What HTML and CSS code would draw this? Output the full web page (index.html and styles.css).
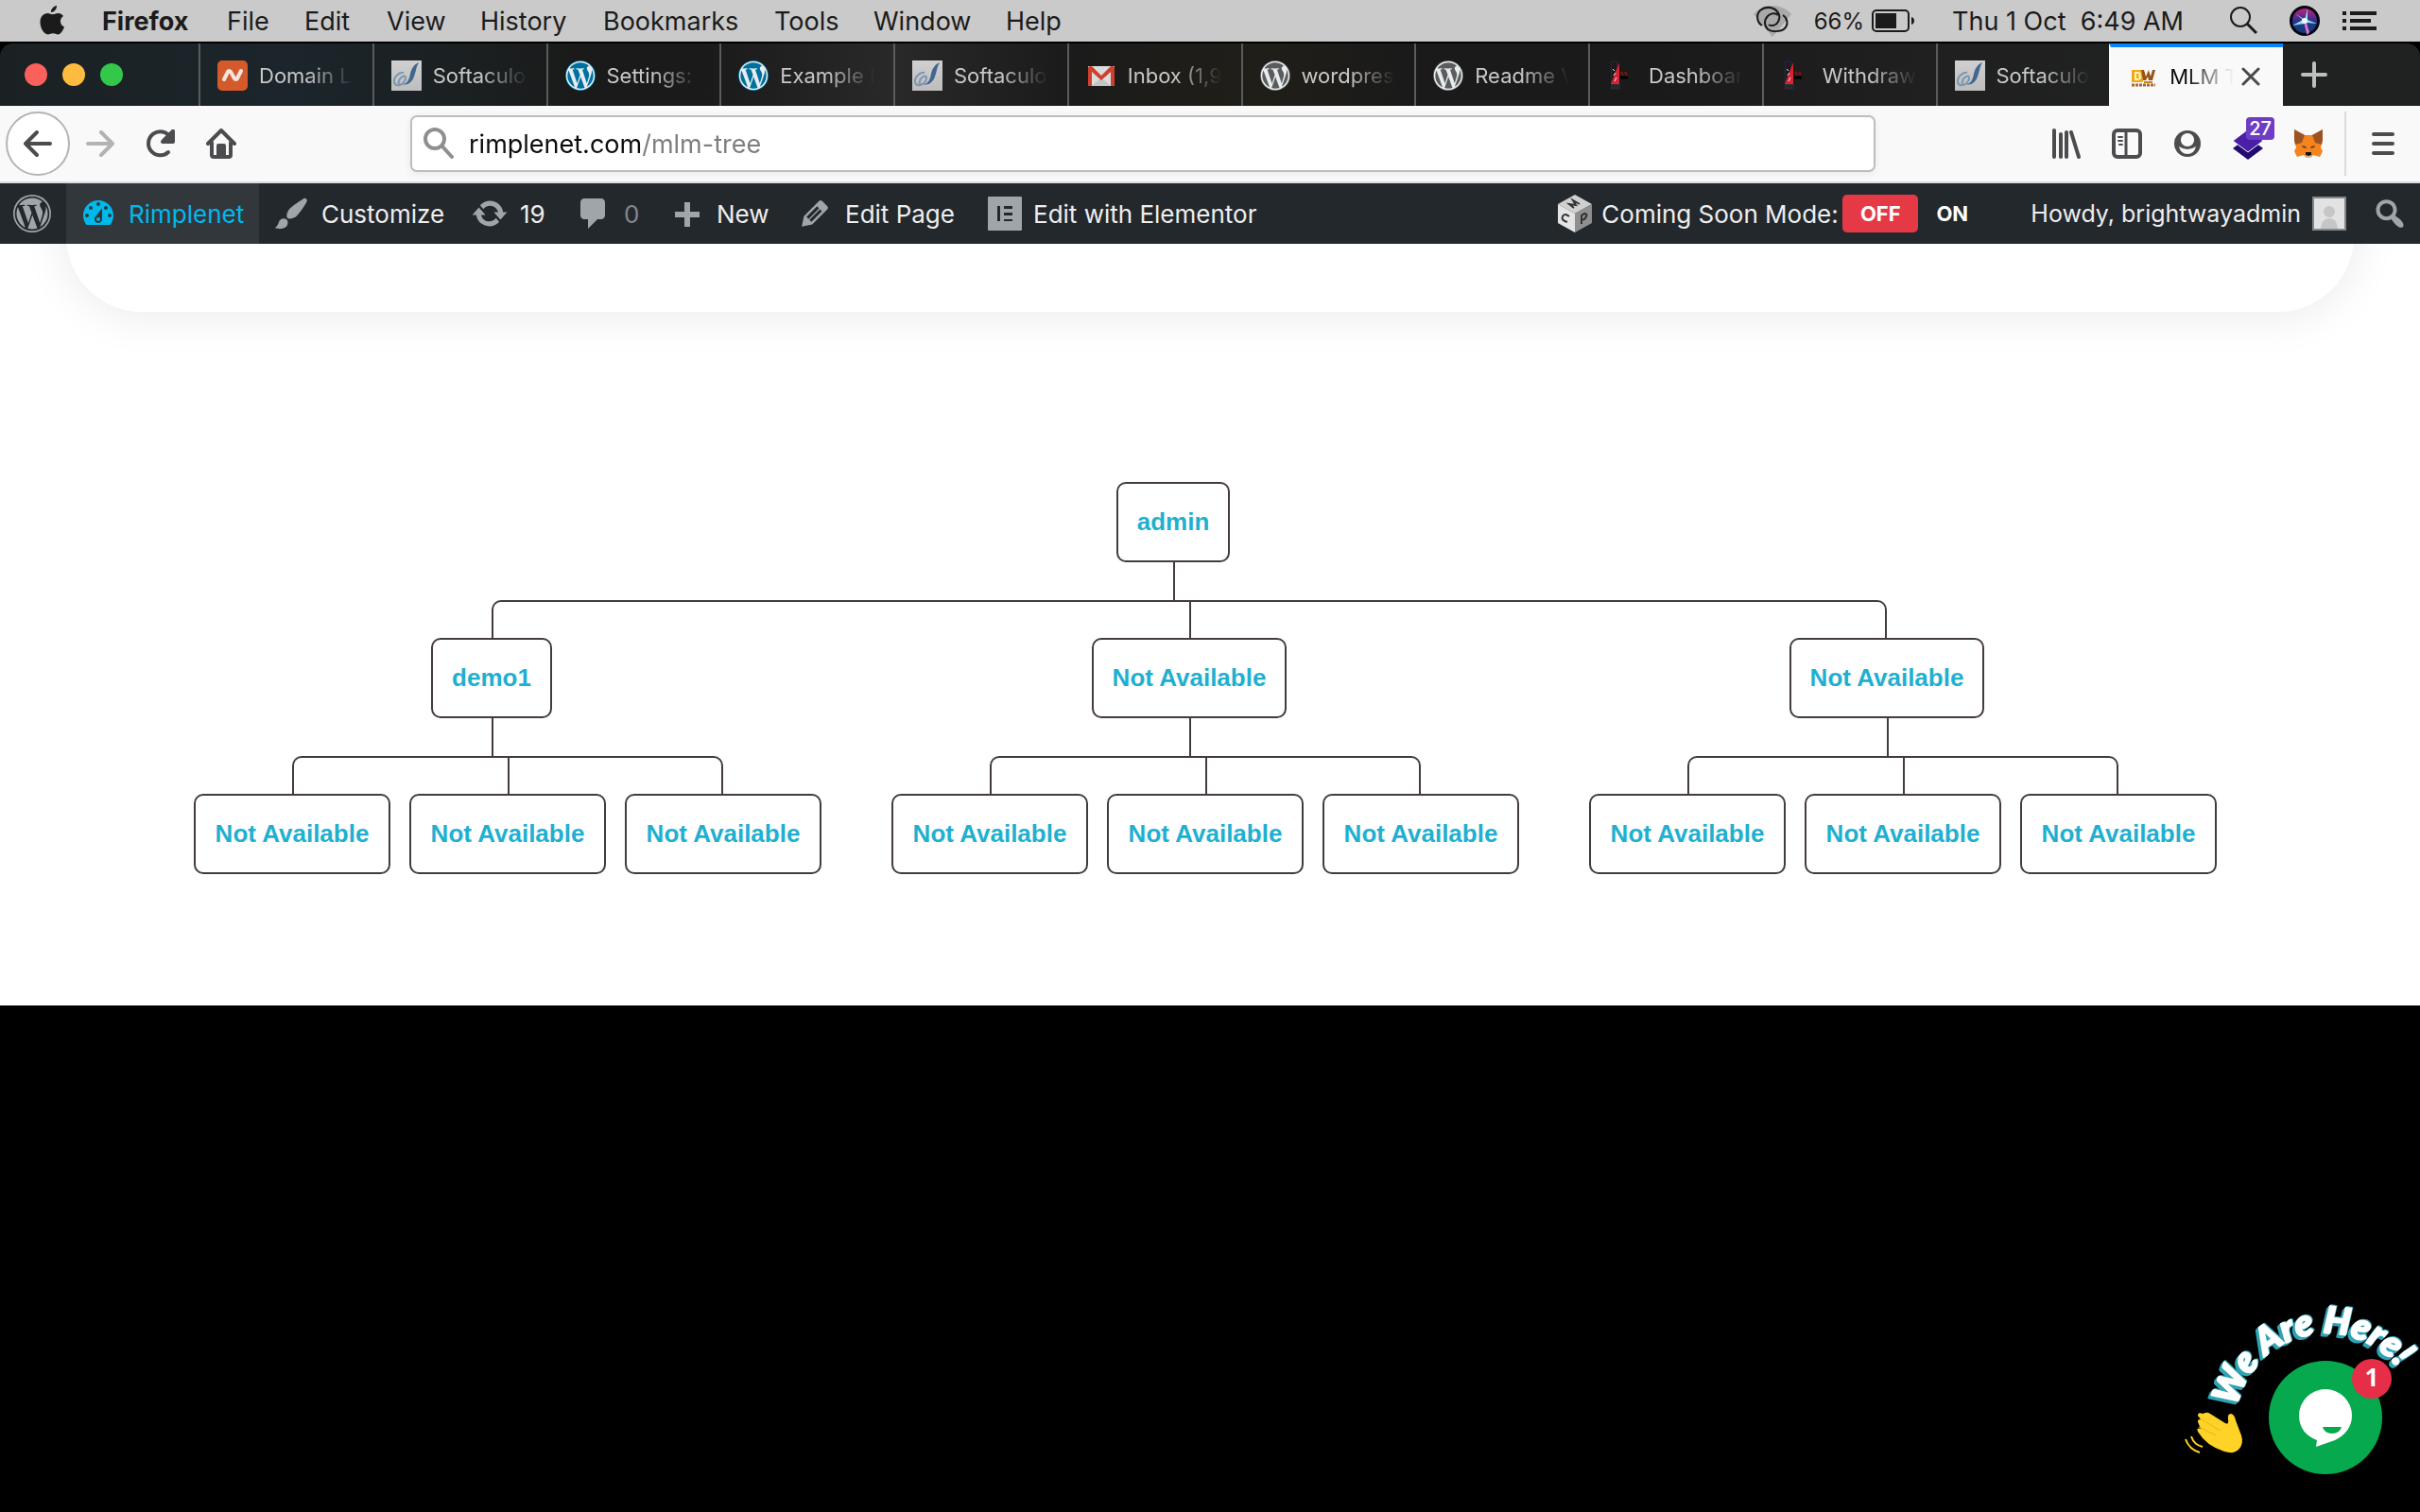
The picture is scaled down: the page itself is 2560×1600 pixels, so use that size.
FILE: index.html
```html
<!DOCTYPE html>
<html lang="en">
<head>
<meta charset="utf-8">
<title>MLM Tree</title>
<link rel="stylesheet" href="styles.css">
</head>
<body>
<svg class="defs" aria-hidden="true">
  <defs>
    <path id="wp-shape" d="M21.469 6.825c.84 1.537 1.318 3.3 1.318 5.175 0 3.979-2.156 7.456-5.363 9.325l3.295-9.527c.615-1.54.82-2.771.82-3.864 0-.405-.026-.78-.07-1.11m-7.981.105c.647-.03 1.232-.105 1.232-.105.582-.075.514-.93-.067-.899 0 0-1.755.135-2.88.135-1.064 0-2.85-.15-2.85-.15-.585-.03-.661.855-.075.885 0 0 .54.061 1.125.09l1.68 4.605-2.37 7.08L5.354 6.9c.649-.03 1.234-.1 1.234-.1.585-.075.516-.93-.065-.896 0 0-1.746.138-2.874.138-.2 0-.438-.008-.69-.015C4.911 3.15 8.235 1.215 12 1.215c2.809 0 5.365 1.072 7.286 2.833-.046-.003-.091-.009-.141-.009-1.06 0-1.812.923-1.812 1.914 0 .89.513 1.643 1.06 2.531.411.72.89 1.643.89 2.977 0 .915-.354 1.994-.821 3.479l-1.075 3.585-3.9-11.61.001.014zM12 22.784c-1.059 0-2.081-.153-3.048-.437l3.237-9.406 3.315 9.087c.024.053.05.101.078.149-1.12.393-2.325.609-3.582.609M1.211 12c0-1.564.336-3.05.935-4.39L7.29 21.709C3.694 19.96 1.212 16.271 1.211 12M12 0C5.385 0 0 5.385 0 12s5.385 12 12 12 12-5.385 12-12S18.615 0 12 0"/>
    <symbol id="fav-wp" viewBox="0 0 24 24">
      <circle cx="12" cy="12" r="12" fill="currentColor"/>
      <use href="#wp-shape" fill="#e8eef0" transform="translate(.6 .6) scale(.95)"/>
    </symbol>
    <linearGradient id="soft-bg" x1="0" y1="0" x2="0" y2="1"><stop offset="0" stop-color="#d0d0d0"/><stop offset="1" stop-color="#bdbdbd"/></linearGradient>
    <symbol id="fav-soft" viewBox="0 0 32 32">
      <rect width="32" height="32" fill="url(#soft-bg)"/>
      <path d="M13 13c-5-1-11 5-10 10 1 5 8 4 11-1 2-3 1-7-2-5-3 1-5 5-4 8" fill="none" stroke="#7d97b3" stroke-width="2"/>
      <path d="M29 2c-5 2-8 7-9 12-1 6-3 11-8 11 5 2 10-2 12-8 2-5 2-10 5-15z" fill="#41668f"/>
    </symbol>
    <symbol id="fav-red" viewBox="0 0 32 32">
      <path d="M4.500 25V1h6v7" fill="none" stroke="#26264f" stroke-width="1"/>
      <path d="M13 2v23H4l5-13z" fill="#d92332"/>
      <path d="M6 9l2 2M9 13l-2 3M10 18l-2 4" stroke="#eee" stroke-width="1"/>
      <path d="M4 26h10" stroke="#2c3b78" stroke-width="1"/>
      <path d="M14 13h8M15 15h7" stroke="#b11" stroke-width="1" stroke-dasharray="3 1"/>
      <path d="M14 18h8" stroke="#000" stroke-width="3"/>
      <path d="M4 29h10" stroke="#333" stroke-width="3" stroke-dasharray="2 1"/>
    </symbol>
  </defs>
</svg>

<header class="menubar">
  <nav class="menus" aria-label="Menu bar">
    <button class="menu" aria-label="Apple"><svg width="26" height="32" viewBox="0 0 26 32" fill="#1b1b1b"><path d="M18 0c.3 3.500-2.800 7-6 7C11.600 3.700 14.800.500 18 0zM25 11c-4.500 2.800-3.800 9.500 1 11.400-1 3-3.800 8-6.700 8-2 0-2.800-1.200-5.300-1.200s-3.300 1.200-5.300 1.200C4.500 30.400.500 23.500.500 17.500.500 11.500 4.300 8 8.300 8c2.200 0 4 1.300 5.400 1.300S17.300 8 19.500 8c2.200 0 4.200 1.100 5.500 3z"/></svg></button>
    <button class="menu app">Firefox</button>
    <button class="menu">File</button>
    <button class="menu">Edit</button>
    <button class="menu">View</button>
    <button class="menu">History</button>
    <button class="menu">Bookmarks</button>
    <button class="menu">Tools</button>
    <button class="menu">Window</button>
    <button class="menu">Help</button>
  </nav>
  <div class="status">
    <svg width="42" height="36" viewBox="0 0 42 36" fill="none"><path d="M1 11C12-1 30-1 41 11L21 35z" fill="#a9a9a9"/><g stroke="#1b1b1b" stroke-width="2"><path d="M10 23C5 20 3 12 8 7q6-5 14-2c6 3 8 9 5 14-2 4-7 5-10 3"/><path d="M32 12c5 3 6 10 2 14-4 4-14 4-18 1-4-4-4-10 0-14 3-3 8-4 11-1"/></g></svg>
    <span class="percent">66%</span>
    <svg width="46" height="24" viewBox="0 0 46 24" fill="none"><rect x="1" y="1" width="38" height="22" rx="4" stroke="#1b1b1b" stroke-width="2"/><rect x="4" y="4" width="22" height="16" fill="#1b1b1b"/><path d="M42 8c4 1 4 7 0 8z" fill="#1b1b1b"/></svg>
    <time class="clock">Thu 1 Oct&nbsp; 6:49 AM</time>
    <svg width="30" height="30" viewBox="0 0 30 30" fill="none" stroke="#1b1b1b"><circle cx="12" cy="11" r="10" stroke-width="2"/><path d="M19 18l10 10" stroke-width="3"/></svg>
    <svg class="siri" width="32" height="32" viewBox="0 0 32 32">
      <defs><linearGradient id="siri" x1="0" y1="0" x2="0" y2="1"><stop offset="0" stop-color="#c0207c"/><stop offset=".5" stop-color="#31308f"/><stop offset="1" stop-color="#0a3f72"/></linearGradient></defs>
      <circle cx="16" cy="16" r="16" fill="#05050f"/><circle cx="16" cy="16" r="13" fill="url(#siri)"/>
      <path d="M16 15L19 3l0 12 10 4-11-1 2 10-4-9L3 21l11-6L6 8z" fill="#7fe6e6"/><path d="M16 17l3 12 1-1z" stroke="#e86bd0" stroke-width="2"/><circle cx="16" cy="16" r="3" fill="#eff"/>
    </svg>
    <svg width="36" height="20" viewBox="0 0 36 20" fill="#1b1b1b"><path d="M0 0h4v4H0zM8 0h28v4H8zM0 8h4v4H0zM8 8h22v4H8zM0 16h4v4H0zM8 16h28v4H8z"/></svg>
  </div>
</header>

<div class="window">
<div class="tabbar">
  <div class="lights"><button class="light red" aria-label="Close"></button><button class="light amber" aria-label="Minimise"></button><button class="light green" aria-label="Zoom"></button></div>
  <nav class="tabs" aria-label="Tabs">
    <a href="#" class="tab"><svg viewBox="0 0 32 32"><rect width="32" height="32" rx="5" fill="#d4592b"/><path d="M7 20l4-8q1-2 3 0l4 7q2 2 3 0l4-8" fill="none" stroke="#f5e6e0" stroke-width="4" stroke-linecap="round" stroke-linejoin="round"/></svg><span>Domain Li</span></a>
    <a href="#" class="tab"><svg><use href="#fav-soft"/></svg><span>Softaculo</span></a>
    <a href="#" class="tab"><svg class="blue"><use href="#fav-wp"/></svg><span>Settings:</span></a>
    <a href="#" class="tab"><svg class="blue"><use href="#fav-wp"/></svg><span>Example M</span></a>
    <a href="#" class="tab"><svg><use href="#fav-soft"/></svg><span>Softaculo</span></a>
    <a href="#" class="tab"><svg viewBox="0 0 32 32"><path d="M2 6h28v21H2z" fill="#dcdcdc"/><path d="M6 27l10-9 10 9z" fill="#c4c4c4"/><path d="M2 27V7q3-2 5 0l9 9 9-9q2-2 5 0v20h-4V12l-10 9L6 12v15z" fill="#d0402f"/></svg><span>Inbox (1,9</span></a>
    <a href="#" class="tab"><svg class="grey"><use href="#fav-wp"/></svg><span>wordpress</span></a>
    <a href="#" class="tab"><svg class="grey"><use href="#fav-wp"/></svg><span>Readme V</span></a>
    <a href="#" class="tab"><svg><use href="#fav-red"/></svg><span>Dashboar</span></a>
    <a href="#" class="tab"><svg><use href="#fav-red"/></svg><span>Withdraw</span></a>
    <a href="#" class="tab"><svg><use href="#fav-soft"/></svg><span>Softaculo</span></a>
    <div class="tab active"><svg viewBox="0 0 32 32"><rect x="4" y="9" width="12" height="13" fill="#f0a818"/><path d="M8 12h3q3 0 1 3 3 2-1 4H8z" fill="none" stroke="#fff3b0" stroke-width="2"/><path d="M14 9h3l2 7 3-7 2 7 2-7h3l-3 11h-4l-1-4-2 4h-3z" fill="#9a5314"/><path d="M17 22h9" stroke="#c98420" stroke-width="2"/><path d="M4 25h25" stroke="#a06a38" stroke-width="3" stroke-dasharray="3 1"/></svg><span>MLM T</span><button class="close" aria-label="Close tab"><svg width="20" height="20" viewBox="0 0 20 20" stroke="#4a4a4a" stroke-width="3" stroke-linecap="round"><path d="M2 2l16 16M18 2L2 18"/></svg></button></div>
  </nav>
  <button class="newtab" aria-label="New tab"><svg width="28" height="28" viewBox="0 0 28 28" stroke="#bebebe" stroke-width="4" stroke-linecap="round"><path d="M14 2v24M2 14h24"/></svg></button>
</div>

<div class="toolbar">
  <div class="nav-buttons">
    <button class="back" aria-label="Back"><svg class="ico" viewBox="0 0 32 32"><path d="M29 16H4M15 4L3 16l12 12"/></svg></button>
    <button class="tool faded" aria-label="Forward"><svg class="ico" viewBox="0 0 32 32"><path d="M3 16h25M17 4l12 12-12 12"/></svg></button>
    <button class="tool" aria-label="Reload"><svg class="ico" viewBox="0 0 32 32"><path d="M26 9A12.500 12.500 0 1 0 24 25M29 3v11H18z"/><path d="M29 3v10H19z" fill="#4c4c4f"/></svg></button>
    <button class="tool" aria-label="Home"><svg class="ico" viewBox="0 0 32 32"><path d="M2 16L16 2l14 14M6 15v13q0 2 2 2h16q2 0 2-2V15"/><path d="M13 28V18h6v10" fill="#4c4c4f"/></svg></button>
  </div>
  <label class="urlbar">
    <svg width="32" height="34" viewBox="0 0 32 34" fill="none" stroke="#8f8f8f" stroke-width="4" stroke-linecap="round"><circle cx="12" cy="12" r="10"/><path d="M20 20l10 11"/></svg>
    <input class="url" type="text" value="rimplenet.com/mlm-tree" aria-label="Address">
  </label>
  <div class="extras">
    <button class="tool" aria-label="Library"><svg class="ico" viewBox="0 0 32 32" ><path d="M3 2v28M10 6v24M16 4v26M21 4l8 26" stroke-width="4"/></svg></button>
    <button class="tool" aria-label="Sidebar"><svg class="ico" viewBox="0 0 32 32"><rect x="2" y="2" width="28" height="28" rx="4" stroke-width="4"/><path d="M15 2v28" stroke-width="3"/><path d="M7 9h4M7 13h4M8 17h3" stroke-width="2"/></svg></button>
    <button class="tool" aria-label="Account"><svg class="ico" viewBox="0 0 32 32"><circle cx="16" cy="16" r="14" fill="#4c4c4f" stroke="none"/><path d="M16 5c5 0 7 4 7 7 0 4-3 7-7 7s-7-3-7-7c0-3 2-7 7-7z" fill="#f9f9fa" stroke="none"/><path d="M7 19q9 6 18 0-2 8-9 8t-9-8z" fill="#f9f9fa" stroke="none"/></svg></button>
    <button class="tool" aria-label="Wallets, 27"><svg width="32" height="34" viewBox="0 0 32 34"><path d="M16 10l16 12-16 12L0 22z" fill="#220b6e"/><path d="M16 2l16 12-16 12L0 14z" fill="#4a1fa8" stroke="#f9f9fa" stroke-width="1"/></svg><span class="count">27</span></button>
    <button class="tool" aria-label="Fox wallet"><svg width="32" height="32" viewBox="0 0 32 32"><path d="M1 1l11 6h8l11-6v12l-2 7 2 4-3 6-7-2-3 3h-4l-3-3-7 2-3-6 2-4-2-7z" fill="#f5841f"/><path d="M1 1l11 6-3 8-7 2-1-5zM31 1L20 7l3 8 7 2 1-5z" fill="#9c5322"/><path d="M13 28h6l-1 3h-4z" fill="#c9b8a8"/><path d="M9 18l4 1 1 2-4-1zM23 18l-4 1-1 2 4-1z" fill="#5b3a25"/><path d="M13 25h6v3l-3 1-3-1z" fill="#161616"/></svg></button>
    <button class="tool appmenu" aria-label="Menu"><svg class="ico" width="28" viewBox="0 0 32 32"><path d="M6 6h20M6 16h20M6 26h20" stroke-width="4"/></svg></button>
  </div>
</div>
</div>

<nav class="adminbar" aria-label="Toolbar">
  <div class="admin-left">
    <a href="#" class="wp" aria-label="About WordPress"><svg width="40" height="40" viewBox="0 0 24 24"><circle cx="12" cy="12" r="12" fill="#a0a5aa"/><use href="#wp-shape" fill="#23282d" transform="translate(1 1) scale(.917)"/></svg></a>
    <a href="#" class="item current"><svg viewBox="0 0 20 20"><path fill-rule="evenodd" d="M3.760 16h12.480c1.100-1.370 1.760-3.110 1.760-5 0-4.420-3.580-8-8-8s-8 3.580-8 8c0 1.890.66 3.630 1.760 5zM10 4c.55 0 1 .45 1 1s-.45 1-1 1-1-.45-1-1 .45-1 1-1zM6 6c.55 0 1 .45 1 1s-.45 1-1 1-1-.45-1-1 .45-1 1-1zm8 0c.55 0 1 .45 1 1s-.45 1-1 1-1-.45-1-1 .45-1 1-1zm-5.370 5.550L12 7v6c0 1.100-.9 2-2 2s-2-.9-2-2c0-.57.24-1.080.63-1.450zM4 10c.55 0 1 .45 1 1s-.45 1-1 1-1-.45-1-1 .45-1 1-1zm12 0c.55 0 1 .45 1 1s-.45 1-1 1-1-.45-1-1 .45-1 1-1zm-5 3c0-.55-.45-1-1-1s-1 .45-1 1 .45 1 1 1 1-.45 1-1z"/></svg>Rimplenet</a>
    <a href="#" class="item"><svg viewBox="0 0 20 20"><path d="M18.330 3.570s.27-.8-.31-1.360c-.53-.52-1.220-.24-1.220-.24-.61.3-5.760 3.470-7.670 5.570-.86.96-2.060 3.790-1.090 4.820.92.98 3.960-.17 4.790-1 2.060-2.060 5.210-7.170 5.500-7.790zM1.400 17.650c2.370-1.560 1.460-3.410 3.230-4.640.93-.65 2.220-.62 3.080.29.63.67.8 2.570-.16 3.460-1.570 1.450-4 1.550-6.150.89z"/></svg>Customize</a>
    <a href="#" class="item"><svg viewBox="0 0 20 20"><path d="M10.200 3.280c3.530 0 6.430 2.610 6.920 6h2.080l-3.500 4-3.500-4h2.320c-.45-1.970-2.210-3.450-4.320-3.450-1.450 0-2.730.71-3.540 1.780L4.950 5.660C6.230 4.200 8.110 3.280 10.200 3.280zm-.4 13.440c-3.520 0-6.430-2.610-6.920-6H.8l3.500-4c1.170 1.330 2.330 2.670 3.500 4H5.480c.45 1.970 2.210 3.450 4.320 3.450 1.450 0 2.730-.71 3.540-1.780l1.710 1.950c-1.280 1.460-3.150 2.380-5.250 2.380z"/></svg>19</a>
    <a href="#" class="item dim"><svg viewBox="0 0 20 20"><path d="M5 2h9c1.100 0 2 .9 2 2v7c0 1.100-.9 2-2 2h-2l-5 5v-5H5c-1.100 0-2-.9-2-2V4c0-1.100.9-2 2-2z"/></svg>0</a>
    <a href="#" class="item"><svg viewBox="0 0 20 20"><path d="M17 9v3h-5v5H9v-5H4V9h5V4h3v5h5z"/></svg>New</a>
    <a href="#" class="item"><svg viewBox="0 0 20 20"><path fill-rule="evenodd" d="M13.890 3.390l2.710 2.720c.46.46.42 1.240.03 1.640l-8.010 8.020-5.560 1.160 1.160-5.580s7.600-7.630 7.990-8.030c.39-.39 1.220-.39 1.680.07zm-2.730 2.790l-5.590 5.610 1.110 1.110 5.540-5.650zm-2.970 8.230l5.580-5.600-1.070-1.080-5.590 5.600z"/></svg>Edit Page</a>
    <a href="#" class="item"><svg class="elementor" viewBox="0 0 36 36"><rect width="36" height="36" rx="1"/><path d="M10 10h3v16h-3zM17 10h9v3h-9zM17 17h9v3h-9zM17 24h9v2h-9z" fill="#23282d"/></svg>Edit with Elementor</a>
  </div>
  <div class="admin-right">
    <svg class="cube" width="38" height="40" viewBox="0 0 38 40"><path d="M19 0l18 10-18 10L1 10z" fill="#d0d0d0"/><path d="M1 10l18 10v20L1 30z" fill="#e4e4e4"/><path d="M37 10L19 20v20l18-10z" fill="#8f8f8f"/><g fill="none" stroke="#333" stroke-width="2"><path d="M18 14l-5-4 7 1-3-5 7 4"/><path d="M13 23q-5-4-7 0t5 6"/><path d="M26 31v-9l3-2q5 0 0 6l-3 1"/></g></svg>
    <span class="mode">Coming Soon Mode:</span>
    <button class="switch off">OFF</button>
    <button class="switch on">ON</button>
    <a href="#" class="howdy">Howdy, brightwayadmin
      <svg width="36" height="36" viewBox="0 0 36 36"><rect x="1" y="1" width="34" height="34" fill="#e2e2e2" stroke="#82878c" stroke-width="2"/><circle cx="18" cy="16" r="6" fill="#c6c6c6"/><path d="M9 34q1-11 9-11t9 11z" fill="#c6c6c6"/></svg></a>
    <button class="find" aria-label="Search"><svg width="40" height="40" viewBox="0 0 20 20"><path fill="#a0a5aa" fill-rule="evenodd" d="M12.140 4.180c1.870 1.870 2.110 4.750.72 6.890.12.1.22.21.36.31.2.16.47.36.81.59.34.24.56.39.66.47.42.31.73.57.94.78.32.32.6.65.84 1 .25.35.44.69.59 1.040.14.35.21.68.18 1-.02.32-.14.59-.36.81s-.49.34-.81.36c-.31.02-.65-.04-.99-.19-.35-.14-.7-.34-1.040-.59-.35-.24-.68-.52-1-.84-.21-.21-.47-.52-.77-.93-.1-.13-.25-.35-.47-.66-.22-.32-.4-.57-.56-.78-.16-.2-.29-.35-.44-.5-2.070 1.090-4.690.76-6.440-.98-2.140-2.150-2.140-5.640 0-7.780 2.150-2.150 5.630-2.150 7.780 0zm-1.410 6.360c1.360-1.370 1.360-3.580 0-4.950-1.370-1.370-3.590-1.370-4.950 0-1.370 1.370-1.370 3.580 0 4.950 1.360 1.370 3.580 1.370 4.950 0z"/></svg></button>
  </div>
</nav>

<main class="page">
  <div class="card"></div>
  <div class="tree">
    <ul class="root">
      <li><a href="#">admin</a>
        <ul>
          <li><a href="#">demo1</a>
            <ul class="leaves">
              <li><a href="#">Not Available</a></li>
              <li><a href="#">Not Available</a></li>
              <li><a href="#">Not Available</a></li>
            </ul>
          </li>
          <li><a href="#">Not Available</a>
            <ul class="leaves">
              <li><a href="#">Not Available</a></li>
              <li><a href="#">Not Available</a></li>
              <li><a href="#">Not Available</a></li>
            </ul>
          </li>
          <li><a href="#">Not Available</a>
            <ul class="leaves">
              <li><a href="#">Not Available</a></li>
              <li><a href="#">Not Available</a></li>
              <li><a href="#">Not Available</a></li>
            </ul>
          </li>
        </ul>
      </li>
    </ul>
  </div>
</main>

<button class="chat" aria-label="Chat, 1 new message">
  <svg width="280" height="250" viewBox="0 0 280 250">
    <defs><path id="arc" d="M85 157A96 96 0 0 1 277 157"/></defs>
    <text class="greeting"><textPath href="#arc" startOffset="18">We Are Here!</textPath></text>
    <circle cx="180" cy="150" r="60" fill="#06a94d"/>
    <path d="M180 120a28 28 0 0 1 28 28c0 13-8 21-18 26l-20 7 1-7c-11-4-19-13-19-26a28 28 0 0 1 28-28z" fill="#fff"/>
    <path d="M177 160h20q-2 7-10 7t-10-7z" fill="#06a94d"/>
    <circle cx="229" cy="109" r="21" fill="#e62e48"/>
    <text class="unread" x="229" y="117" text-anchor="middle">1</text>
    <path fill="#ffd228" d="M45 165q-2-5 3-3l-2-5q-3-5 2-5l-3-4q0-4 5-2l3-1q2-1 5 1l16 10q4 2 3-4-1-6 3-6 4 1 5 7l6 16q3 9-3 15-5 5-15 2-19-6-28-21z"/>
    <path d="M49 152l20 12M46 160l18 9" stroke="#e9b512" stroke-width="1"/>
    <path d="M38 170q3 9 12 11M32 173q4 11 15 14" fill="none" stroke="#ffd228" stroke-width="2"/>
  </svg>
</button>
</body>
</html>
```
FILE: styles.css
```css
* { box-sizing: border-box; }

body {
  margin: 0;
  min-height: 100vh;
  background: #000;
  font-family: Inter, "Liberation Sans", sans-serif;
  position: relative;
}

button {
  margin: 0;
  padding: 0;
  border: 0;
  background: none;
  color: inherit;
  font: inherit;
}

a { color: inherit; text-decoration: none; }
svg { display: block; flex: none; }
.defs { position: absolute; width: 0; height: 0; }

/* System menu bar */
.menubar {
  display: flex;
  justify-content: space-between;
  height: 44px;
  background: #cacaca;
  color: #1b1b1b;
  font-size: 27px;
}
.menus {
  display: grid;
  grid-template-columns: 66px 132px 82px 87px 99px 130px 181px 105px 140px 100px;
  padding-left: 42px;
}
.menu { display: flex; align-items: center; white-space: nowrap; }
.app { font-weight: 700; }
.status { display: flex; align-items: center; padding-right: 46px; white-space: nowrap; }
.percent { margin: 0 8px 0 23px; font-size: 24px; }
.clock { margin: 0 48px 0 39px; }
.siri { margin: 0 24px 0 34px; }

/* Browser window */
.window { padding-top: 2px; }
.tabbar {
  display: flex;
  height: 66px;
  border-radius: 14px 14px 0 0;
  background: linear-gradient(90deg, #1b2123 0, #1b252b 12%, #1b1f20 20%, #1a1a1a 24%, #1a1a1a 29%, #292929 37%, #1b1b1b 44%, #201e18 52%, #1a1a1a 58%, #1a1a1a 68%, #202020 80%, #202222 100%);
  overflow: hidden;
}
.lights { display: flex; align-items: center; flex: none; gap: 16px; width: 210px; padding-left: 26px; }
.light { flex: none; width: 24px; height: 24px; border-radius: 50%; }
.red { background: #fc605b; }
.amber { background: #fdbc40; }
.green { background: #34c84a; }
.tabs { display: flex; flex: 1 1 0; min-width: 0; }
.tab {
  display: flex;
  align-items: center;
  flex: 1 1 0;
  min-width: 0;
  padding: 2px 20px 0 18px;
  border-left: 2px solid #5b5b5b;
  color: #c8c8c8;
  font-size: 22px;
}
.tab > svg { width: 32px; height: 32px; margin-right: 12px; }
.tab > span {
  flex: 1;
  overflow: hidden;
  white-space: nowrap;
  line-height: 32px;
  mask-image: linear-gradient(90deg, #000 calc(100% - 50px), transparent);
}
.blue { color: #00709e; }
.grey { color: #5c5c5c; }
.tab.active {
  padding-top: 0;
  border-top: 4px solid #0a84ff;
  border-left-color: #f9f9fa;
  background: #f9f9fa;
  color: #0c0c0d;
}
.close { margin: 0 4px 0 8px; }
.newtab { display: flex; align-items: center; flex: none; width: 145px; padding-left: 19px; }

.toolbar {
  display: flex;
  align-items: center;
  height: 82px;
  padding-left: 6px;
  border-bottom: 2px solid #d8dadd;
  background: #f9f9fa;
}
.nav-buttons { display: flex; align-items: center; flex: none; width: 428px; }
.tool {
  display: flex;
  align-items: center;
  justify-content: center;
  flex: none;
  position: relative;
  width: 64px;
  height: 68px;
}
.back {
  display: flex;
  align-items: center;
  justify-content: center;
  width: 68px;
  height: 68px;
  border: 2px solid #b4b4b4;
  border-radius: 50%;
  background: #fff;
}
.ico {
  width: 32px;
  height: 32px;
  fill: none;
  stroke: #4c4c4f;
  stroke-width: 4;
  stroke-linecap: round;
  stroke-linejoin: round;
}
.faded { opacity: .4; }
.urlbar {
  display: flex;
  align-items: center;
  gap: 16px;
  flex: 1;
  height: 60px;
  padding-left: 12px;
  border: 2px solid #bdbdbd;
  border-radius: 7px;
  background: #fff;
  box-shadow: 0 2px 8px rgba(0, 0, 0, .07);
}
.url {
  flex: 1;
  height: 40px;
  padding: 0;
  border: 0;
  background: linear-gradient(90deg, #0c0c0d 183px, #7d7d7d 183px);
  background-clip: text;
  color: transparent;
  font: 27px Inter, sans-serif;
}
.extras { display: flex; align-items: center; flex: none; padding-left: 170px; }
.count {
  position: absolute;
  top: 6px;
  left: 30px;
  width: 30px;
  height: 24px;
  border-radius: 4px;
  background: #6f3cc4;
  color: #fff;
  font-size: 20px;
  font-weight: 500;
  line-height: 24px;
  text-align: center;
}
.appmenu { width: 80px; margin-left: 6px; border-left: 2px solid #dcdcdc; }

/* Site admin bar */
.adminbar {
  display: flex;
  justify-content: space-between;
  height: 64px;
  background: #23282d;
  color: #eee;
  font-size: 26px;
  white-space: nowrap;
}
.admin-left { display: grid; grid-template-columns: 70px 204px 210px 110px 98px 136px 197px 310px; }
.wp { display: flex; align-items: center; padding-left: 14px; }
.item { display: flex; align-items: center; gap: 12px; padding-left: 14px; }
.item svg { width: 40px; height: 40px; fill: #a0a5aa; }
.item .elementor { width: 36px; height: 36px; margin-left: 6px; }
.current { background: #32373c; color: #00b9eb; }
.item.current svg { fill: #00b9eb; }
.dim { color: #82878c; }
.admin-right { display: flex; align-items: center; padding-right: 12px; }
.mode { width: 255px; margin-left: 9px; }
.switch {
  width: 80px;
  height: 40px;
  border-radius: 5px;
  color: #fff;
  font-size: 22px;
  font-weight: 700;
}
.off { background: #e63946; }
.on { width: 72px; }
.howdy { display: flex; align-items: center; gap: 12px; margin-left: 47px; font-size: 25px; }
.find { margin-left: 26px; }

/* Page */
.page {
  overflow: hidden;
  padding-bottom: 139px;
  background: #fff;
}
.card {
  height: 172px;
  margin: -100px 70px 0;
  border-radius: 80px;
  background: #fff;
  box-shadow: 0 2px 50px rgba(0, 0, 0, .09);
}
.tree {
  display: flex;
  justify-content: center;
  margin-top: 180px;
  padding-right: 78px;
  font: bold 26px/41px "Liberation Sans", Arial, sans-serif;
  color: #1fb0d0;
  text-align: center;
}
.tree ul { display: flex; margin: 0; padding: 0; list-style: none; }
.tree li { position: relative; padding: 40px 10px 0; }
.tree .root > li { padding-top: 0; }
.tree li > ul { position: relative; padding: 40px 0 0 34px; }
.tree a {
  display: inline-block;
  vertical-align: top;
  padding: 20px;
  border: 2px solid #443c3c;
  border-radius: 10px;
  white-space: nowrap;
}
.tree .leaves a { min-width: 208px; }
.tree li li::before,
.tree li li::after {
  content: "";
  position: absolute;
  top: 0;
  width: 50%;
  height: 40px;
  border-top: 2px solid #443c3c;
}
.tree li li::before { right: 50%; }
.tree li li::after { left: 50%; border-left: 2px solid #443c3c; }
.tree li li:first-child::before { border: 0; }
.tree li li:first-child::after { border-radius: 10px 0 0; }
.tree li li:last-child::after { border: 0; }
.tree li li:last-child::before { border-right: 2px solid #443c3c; border-radius: 0 10px 0 0; }
.tree li > ul::before {
  content: "";
  position: absolute;
  top: 0;
  left: 50%;
  height: 40px;
  border-left: 2px solid #443c3c;
}

/* Chat launcher */
.chat { position: fixed; right: 0; bottom: 0; }
.greeting {
  fill: #fff;
  stroke: #fff;
  stroke-width: 2px;
  stroke-linejoin: round;
  font: italic 900 39px Lato, sans-serif;
  filter: drop-shadow(1px -1px 0 #2fa3b3) drop-shadow(-1px 1px 0 #2fa3b3) drop-shadow(-2px 2px 0 #2fa3b3);
}
.unread { fill: #fff; font: bold 26px "Open Sans", sans-serif; }
```
